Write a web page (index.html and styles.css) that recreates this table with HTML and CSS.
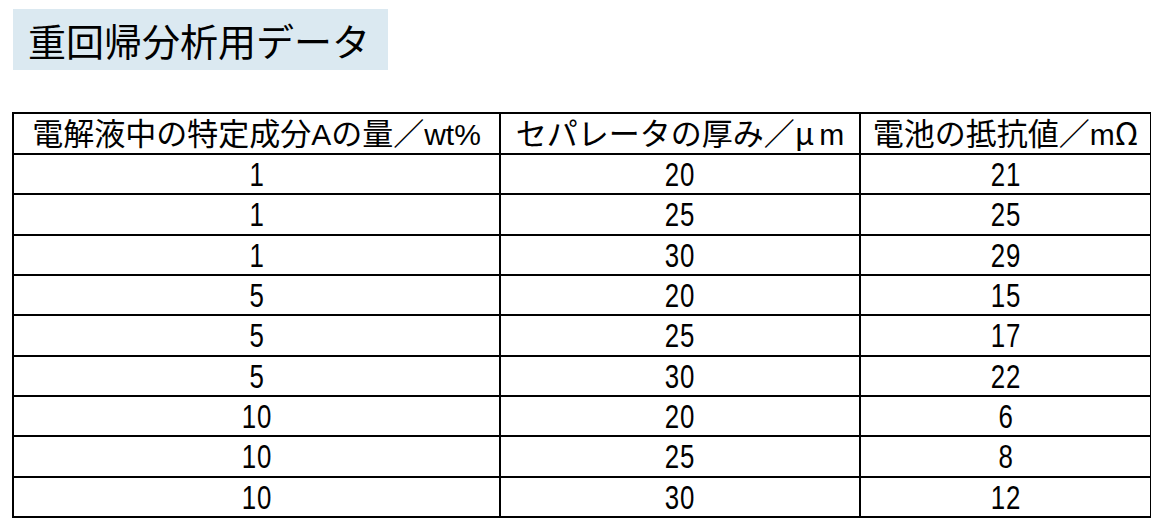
FILE: index.html
```html
<!DOCTYPE html>
<html lang="ja">
<head>
<meta charset="utf-8">
<link rel="stylesheet" href="styles.css">
</head>
<body>
<div class="page">
  <div class="title">重回帰分析用データ</div>
  <table class="data">
    <colgroup>
      <col class="c1">
      <col class="c2">
      <col class="c3">
    </colgroup>
    <thead>
      <tr>
        <th>電解液中の特定成分<span class="lat">A</span>の量／<span class="lat">wt%</span></th>
        <th>セパレータの厚み／μ<span class="lat sp">m</span></th>
        <th>電池の抵抗値／<span class="lat">m</span>Ω</th>
      </tr>
    </thead>
    <tbody>
      <tr><td><span class="num">1</span></td><td><span class="num">20</span></td><td><span class="num">21</span></td></tr>
      <tr><td><span class="num">1</span></td><td><span class="num">25</span></td><td><span class="num">25</span></td></tr>
      <tr><td><span class="num">1</span></td><td><span class="num">30</span></td><td><span class="num">29</span></td></tr>
      <tr><td><span class="num">5</span></td><td><span class="num">20</span></td><td><span class="num">15</span></td></tr>
      <tr><td><span class="num">5</span></td><td><span class="num">25</span></td><td><span class="num">17</span></td></tr>
      <tr><td><span class="num">5</span></td><td><span class="num">30</span></td><td><span class="num">22</span></td></tr>
      <tr><td><span class="num">10</span></td><td><span class="num">20</span></td><td><span class="num">6</span></td></tr>
      <tr><td><span class="num">10</span></td><td><span class="num">25</span></td><td><span class="num">8</span></td></tr>
      <tr><td><span class="num">10</span></td><td><span class="num">30</span></td><td><span class="num">12</span></td></tr>
    </tbody>
  </table>
</div>
</body>
</html>
```
FILE: styles.css
```css
html, body {
  margin: 0;
  padding: 0;
  background: #ffffff;
}
.page {
  padding: 9px 0 0 12px;
  display: flex;
  flex-direction: column;
  align-items: flex-start;
  font-family: "Noto Sans CJK JP", "Noto Sans", sans-serif;
  color: #000;
}
.title {
  margin-left: 1px;
  width: 360px;
  height: 61px;
  padding-left: 15px;
  background: #dbe9f1;
  font-size: 38px;
  line-height: 61px;
  white-space: nowrap;
}
.data {
  margin-top: 42px;
  border-collapse: collapse;
  table-layout: fixed;
  width: 1138px;
}
.c1 { width: 487px; }
.c2 { width: 360px; }
.c3 { width: 291px; }
.data th, .data td {
  border: 2px solid #000;
  height: 38.33px;
  padding: 0;
  text-align: center;
  vertical-align: middle;
  white-space: nowrap;
  line-height: 36px;
}
.data th {
  height: 39px;
  font-weight: normal;
  font-size: 31px;
}
.lat {
  font-family: "Liberation Sans", sans-serif;
  font-size: 30px;
}
.sp {
  margin-left: 5px;
}
.data td {
  font-family: "Liberation Sans", sans-serif;
  font-size: 34px;
}
.num {
  display: inline-block;
  transform: scaleX(0.76);
  letter-spacing: 1px;
}
```
